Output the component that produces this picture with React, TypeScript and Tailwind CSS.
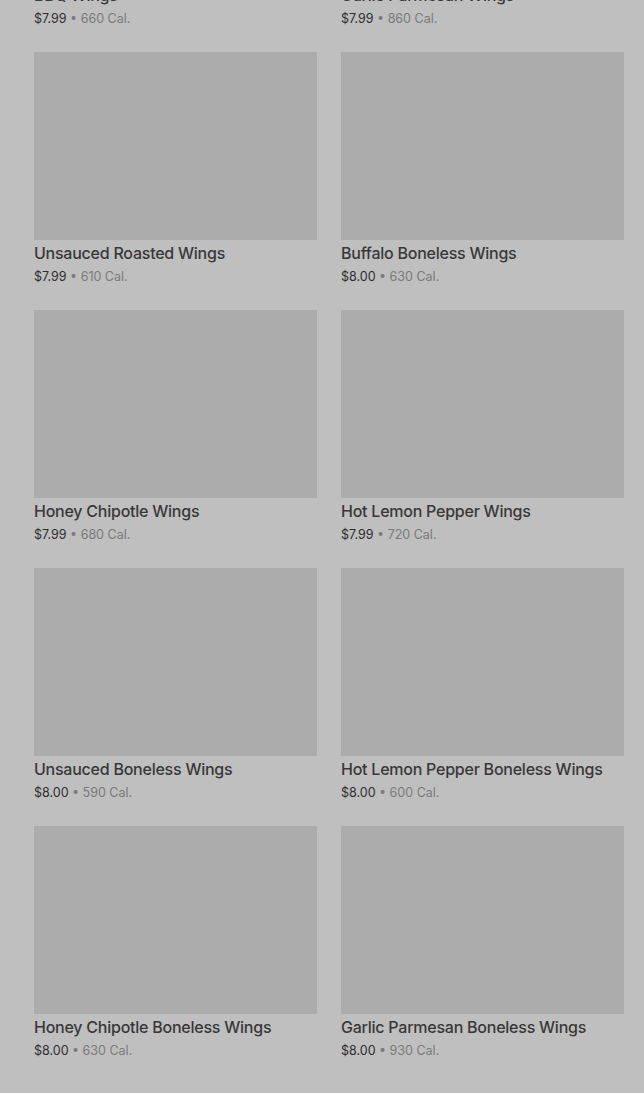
const items = [
  { name: 'BBQ Wings', price: '$7.99', cal: '660 Cal.' },
  { name: 'Garlic Parmesan Wings', price: '$7.99', cal: '860 Cal.' },
  { name: 'Unsauced Roasted Wings', price: '$7.99', cal: '610 Cal.' },
  { name: 'Buffalo Boneless Wings', price: '$8.00', cal: '630 Cal.' },
  { name: 'Honey Chipotle Wings', price: '$7.99', cal: '680 Cal.' },
  { name: 'Hot Lemon Pepper Wings', price: '$7.99', cal: '720 Cal.' },
  { name: 'Unsauced Boneless Wings', price: '$8.00', cal: '590 Cal.' },
  { name: 'Hot Lemon Pepper Boneless Wings', price: '$8.00', cal: '600 Cal.' },
  { name: 'Honey Chipotle Boneless Wings', price: '$8.00', cal: '630 Cal.' },
  { name: 'Garlic Parmesan Boneless Wings', price: '$8.00', cal: '930 Cal.' },
];

export default function App() {
  return (
    <div
      className="h-[1093px] w-[644px] overflow-hidden bg-[#bfbfbf]"
      style={{ fontFamily: 'Inter, "Noto Sans", sans-serif' }}
    >
      {/* scrolled menu grid, dimmed by modal backdrop */}
      <div className="-mt-[206px] grid grid-cols-2 gap-x-6 gap-y-[23px] pl-[34px] pr-5">
        {items.map((item) => (
          <div key={item.name} className="flex flex-col">
            <div className="h-[188px] w-full bg-[#acacac]"></div>
            <div className="mt-[2px] h-[22px] truncate text-[16px] leading-[22px] font-medium tracking-[-0.015em] text-[#383838]">
              {item.name}
            </div>
            <div className="mt-[3px] h-5 text-[12.5px] leading-5">
              <span className="text-[#2e2e2e]">{item.price}</span>
              <span className="text-[#7a7a7a]"> • {item.cal}</span>
            </div>
          </div>
        ))}
      </div>
    </div>
  );
}
